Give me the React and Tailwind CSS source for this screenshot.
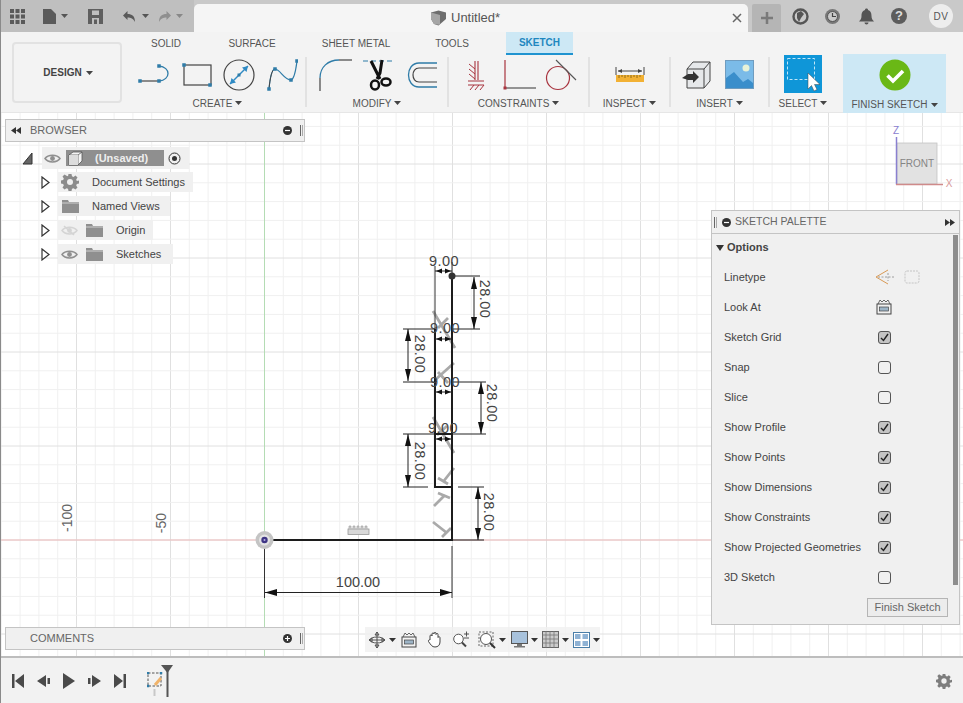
import { Fragment } from 'react';

const Caret = ({ color = '#444', className = '' }) => (
  <svg width="7" height="4" viewBox="0 0 7 4" className={className}>
    <path d="M0 0h7L3.5 4z" fill={color} />
  </svg>
);

const Pt = ({ x, y, c = '#2f7ca8', s = 4 }) => <rect x={x - s / 2} y={y - s / 2} width={s} height={s} fill={c} />;

const Icon = ({ w, h, children, className = '' }) => (
  <svg width={w} height={h} viewBox={`0 0 ${w} ${h}`} fill="none" className={className}>
    {children}
  </svg>
);

const LineArcIcon = () => (
  <Icon w={34} h={30}>
    <path d="M3 21H22" stroke="#444" strokeWidth="1.200" />
    <path d="M22 21C34 20 34 7 22 6" stroke="#2f7ca8" strokeWidth="1.300" />
    <Pt x={3} y={21} s={3.500} /><Pt x={22} y={21} s={3.500} /><Pt x={22} y={6} s={3.500} />
  </Icon>
);
const RectIcon = () => (
  <Icon w={30} h={24}>
    <rect x="2" y="2" width="27" height="20" stroke="#444" strokeWidth="1.200" />
    <Pt x={2} y={2} s={3.500} /><Pt x={28} y={22} s={3.500} />
  </Icon>
);
const CircleIcon = () => (
  <Icon w={32} h={32}>
    <circle cx="16" cy="16" r="15" stroke="#444" strokeWidth="1.200" />
    <path d="M7 25L25 7" stroke="#2f8ac4" strokeWidth="1.400" />
    <path d="M25 7l-6 1.500 4.500 4.500zM7 25l6-1.500L8.500 19z" fill="#2f8ac4" />
    <Pt x={16} y={16} s={3} />
  </Icon>
);
const SplineIcon = () => (
  <Icon w={32} h={34}>
    <path d="M3 31C4 20 6 11 9 11C14 11 18 22 25 22C29 21 30 10 31 3" stroke="#2f7ca8" strokeWidth="1.200" />
    <path d="M3 31C4 20 6 11 9 11" stroke="#444" strokeWidth="1" />
    <Pt x={3} y={31} s={3.500} /><Pt x={9} y={11} s={3.500} /><Pt x={25} y={22} s={3.500} /><Pt x={31} y={3} s={3.500} />
  </Icon>
);
const FilletIcon = () => (
  <Icon w={36} h={34} className="ml-[2px]">
    <path d="M2 33V20" stroke="#444" strokeWidth="1.200" />
    <path d="M2 20C2 9 10 2 21 2" stroke="#2f7ca8" strokeWidth="1.300" />
    <path d="M21 2H34" stroke="#444" strokeWidth="1.200" />
  </Icon>
);
const ScissorsIcon = () => (
  <Icon w={34} h={32}>
    <path d="M1 2H33" stroke="#2f7ca8" strokeWidth="1.200" strokeDasharray="5 3" />
    <path d="M9 2L18 20M20 1L18 14L15 20" stroke="#111" strokeWidth="3" />
    <ellipse cx="13" cy="26" rx="4" ry="4.500" stroke="#111" strokeWidth="2.500" />
    <ellipse cx="24" cy="23" rx="4.500" ry="3.500" stroke="#111" strokeWidth="2.500" />
  </Icon>
);
const OffsetIcon = () => (
  <Icon w={34} h={28}>
    <path d="M33 2H15C1 2 1 26 15 26H33" stroke="#2f7ca8" strokeWidth="1.300" />
    <path d="M33 7H15C7 7 7 21 15 21H33" stroke="#444" strokeWidth="1.200" />
  </Icon>
);
const FixIcon = () => (
  <Icon w={20} h={30} className="ml-[8px]">
    <path d="M9 1V20M12 1V20" stroke="#a8343f" strokeWidth="1.100" />
    <path d="M2 21H18M2 25H18" stroke="#a8343f" strokeWidth="1.200" />
    <path d="M3 4L9 9M3 9L9 14M3 14L9 19M4 30L8 25M9 30L13 25M14 30L18 25" stroke="#a8343f" strokeWidth="1" />
  </Icon>
);
const PerpIcon = () => (
  <Icon w={34} h={32} className="ml-[17px]">
    <path d="M2 1V29" stroke="#a8343f" strokeWidth="1.200" />
    <path d="M2 29H33" stroke="#444" strokeWidth="1.100" />
    <Pt x={2} y={29} c="#a8343f" s={3} />
  </Icon>
);
const TangentIcon = () => (
  <Icon w={34} h={32} className="ml-[8px]">
    <circle cx="13" cy="19" r="11.500" stroke="#a8343f" strokeWidth="1.200" />
    <path d="M11 1L31 21" stroke="#555" strokeWidth="1.100" />
  </Icon>
);
const RulerIcon = () => (
  <Icon w={30} h={18}>
    <path d="M1 1V9M29 1V9M3 5H27" stroke="#444" strokeWidth="1" />
    <path d="M3 5l4-2v4zM27 5l-4-2v4z" fill="#444" />
    <rect x="1" y="9" width="28" height="7" fill="#f2b134" />
    <path d="M4 9v3M7 9v2M10 9v3M13 9v2M16 9v3M19 9v2M22 9v3M25 9v2" stroke="#7a5a10" strokeWidth="0.800" />
  </Icon>
);
const InsertIcon = () => (
  <Icon w={30} h={30} className="-ml-[3px]">
    <path d="M5 9L11 2H28V21L22 28H5z" fill="#e6e8ea" stroke="#444" strokeWidth="1" />
    <path d="M22 9L28 2M22 9V28M5 9H22" stroke="#444" strokeWidth="1" />
    <path d="M0 18L6 14H11V11L17 17L11 23V20H6z" fill="#333" />
  </Icon>
);
const ImageIcon = () => (
  <Icon w={30} h={30}>
    <rect x="0.500" y="0.500" width="28" height="28" fill="#7bbbe8" stroke="#6f9cbf" />
    <circle cx="21" cy="8" r="3.500" fill="#e8f2d8" />
    <path d="M1 28V18L9 12L18 22L23 19L28 23V28z" fill="#3a8ecb" />
  </Icon>
);
const SelectIcon = () => (
  <Icon w={38} h={38}>
    <rect width="38" height="38" fill="#0f96d8" />
    <rect x="3.500" y="3.500" width="27" height="21" stroke="#bfe6f8" strokeDasharray="3 2" />
    <path d="M24 18V34L27.500 30.500L30 36L33 34.500L30.500 29.500H36z" fill="#fff" stroke="#444" strokeWidth="0.500" />
  </Icon>
);
const FinishIcon = () => (
  <Icon w={32} h={32}>
    <circle cx="16" cy="16" r="15.500" fill="#6ab816" />
    <path d="M8.500 16.500L14 22L24 12" stroke="#fff" strokeWidth="3.600" />
  </Icon>
);

const Gear = ({ size = 18, color = '#8c8c8c' }) => (
  <svg width={size} height={size} viewBox="0 0 18 18">
    <path d="M7.500 1h3l.5 2.300 1.500.6 2-1.300 2 2-1.300 2 .6 1.500L18 7.500v3l-2.200.5-.6 1.500 1.300 2-2 2-2-1.300-1.500.6-.5 2.200h-3L7 15.800l-1.500-.6-2 1.300-2-2 1.300-2-.6-1.500L0 10.500v-3l2.200-.5.6-1.500-1.300-2 2-2 2 1.300L7 3.300z" fill={color} />
    <circle cx="9" cy="9" r="3" fill="#f0f0f0" />
  </svg>
);
const Eye = ({ color = '#8f8f8f', off = false }) => (
  <svg width="17" height="11" viewBox="0 0 17 11" fill="none">
    <path d="M1 5.500C4 1 13 1 16 5.500C13 10 4 10 1 5.500z" stroke={color} strokeWidth="1.500" />
    <circle cx="8.500" cy="5.500" r="2.400" fill={color} />
    {off && <path d="M3 1L13 10" stroke={color} strokeWidth="1.500" />}
  </svg>
);
const Folder = () => (
  <svg width="17" height="13" viewBox="0 0 17 13">
    <path d="M0 0H6L7 2H17V13H0z" fill="#8f8f8f" />
    <path d="M0 3H17" stroke="#dedede" strokeWidth="0.800" />
  </svg>
);
const TreeArrow = () => (
  <svg width="9" height="13" viewBox="0 0 9 13" fill="none">
    <path d="M1 1L8 6.500L1 12z" fill="#fff" stroke="#333" strokeWidth="1.200" />
  </svg>
);
const PanelDot = ({ plus }) => (
  <svg width="9" height="9" viewBox="0 0 9 9">
    <circle cx="4.500" cy="4.500" r="4.500" fill="#333" />
    <path d={plus ? 'M2 4.500H7M4.500 2V7' : 'M2 4.500H7'} stroke="#fff" strokeWidth="1.200" />
  </svg>
);
const Grip = () => (
  <div className="flex gap-[1px]">
    <span className="w-[1px] h-[11px] bg-[#666]" />
    <span className="w-[1px] h-[11px] bg-[#aaa]" />
  </div>
);

const Cube = ({ size = 15 }) => (
  <svg width={size} height={size} viewBox="0 0 15 15">
    <path d="M1 4L5 1H14V10L10 14H1z" fill="#f4f4f4" stroke="#555" strokeWidth="0.800" />
    <path d="M1 4H10V14M10 4L14 1" fill="none" stroke="#555" strokeWidth="0.800" />
    <path d="M1 4H10V14H1z" fill="#dcdcdc" />
  </svg>
);

const groups = [
  { label: 'CREATE', w: 'w-[175px]', gap: 'gap-[11px]', icons: [LineArcIcon, RectIcon, CircleIcon, SplineIcon] },
  { label: 'MODIFY', w: 'w-[140px]', gap: 'gap-[8px]', icons: [FilletIcon, ScissorsIcon, OffsetIcon] },
  { label: 'CONSTRAINTS', w: 'w-[139px]', gap: 'gap-0', icons: [FixIcon, PerpIcon, TangentIcon] },
  { label: 'INSPECT', w: 'w-[79px]', gap: 'gap-0', icons: [RulerIcon] },
  { label: 'INSERT', w: 'w-[97px]', gap: 'gap-[13px]', icons: [InsertIcon, ImageIcon] },
];

const paletteRows = [
  ['Sketch Grid', true], ['Snap', false], ['Slice', false], ['Show Profile', true], ['Show Points', true],
  ['Show Dimensions', true], ['Show Constraints', true], ['Show Projected Geometries', true], ['3D Sketch', false],
];

const Check = ({ on }) => (
  <div className={`w-[13px] h-[13px] rounded-[3px] border border-[#555] flex items-center justify-center ${on ? 'bg-[#c4c4c4]' : 'bg-[#f0f0f0]'}`}>
    {on && (
      <svg width="9" height="9" viewBox="0 0 9 9" fill="none">
        <path d="M1 5L3.500 7.500L8 1" stroke="#222" strokeWidth="1.400" />
      </svg>
    )}
  </div>
);

const vLines = Array.from({ length: 52 }, (_, i) => 264.5 + (i - 14) * 18.8);
const hLines = Array.from({ length: 30 }, (_, i) => 540 + (i - 24) * 18.8);

const dimFont = { fontFamily: '"Liberation Sans", Arial, sans-serif', fontSize: 14.500, fill: '#444' };

const VDim = ({ x, y1, y2, tx, cy }) => (
  <g>
    <path d={`M${x} ${y1}V${y2}`} stroke="#222" strokeWidth="1" />
    <path d={`M${x} ${y1}l-3 12h6zM${x} ${y2}l-3 -12h6z`} fill="#111" />
    <text x={tx} y={cy} textAnchor="middle" transform={`rotate(90 ${tx} ${cy})`} dominantBaseline="middle" style={{ ...dimFont, letterSpacing: 0.400 }}>28.00</text>
  </g>
);

const SmallDim = ({ y, ty, tx }) => (
  <g>
    <path d={`M435 ${y}H452`} stroke="#222" strokeWidth="1" />
    <path d={`M436 ${y}l6 -2.500v5zM451 ${y}l-6 -2.500v5z`} fill="#111" />
    <text x={tx} y={ty} textAnchor="middle" style={{ ...dimFont, letterSpacing: 0.400 }}>9.00</text>
  </g>
);

const Tee = ({ s, b }) => (
  <path d={`M${s[0]} ${s[1]}L${s[2]} ${s[3]}M${b[0]} ${b[1]}L${b[2]} ${b[3]}`} stroke="#a9a9a9" strokeWidth="2.800" fill="none" />
);

const SketchCanvas = () => (
  <svg className="absolute inset-0" width="963" height="543" viewBox="0 113 963 543" fill="none">
    <rect x="0" y="113" width="963" height="543" fill="#fff" />
    {vLines.map((x, i) => (
      <path key={x} d={`M${x} 113V656`} stroke={(i - 14) % 5 === 0 ? '#e0e0e0' : '#f0f0f0'} strokeWidth="1" />
    ))}
    {hLines.map((y, i) => (
      <path key={y} d={`M0 ${y}H963`} stroke={(i - 24) % 5 === 0 ? '#e0e0e0' : '#f0f0f0'} strokeWidth="1" />
    ))}
    <path d="M264.500 113V656" stroke="#b4dcb4" strokeWidth="1" />
    <path d="M0 540H963" stroke="#f0bcbc" strokeWidth="1" />

    <text x="72" y="518" textAnchor="middle" transform="rotate(-90 72 518)" style={{ ...dimFont, fontSize: 14, fill: '#666' }}>-100</text>
    <text x="166" y="523" textAnchor="middle" transform="rotate(-90 166 523)" style={{ ...dimFont, fontSize: 14, fill: '#666' }}>-50</text>

    <Tee s={[433, 311, 455, 348]} b={[438, 328, 448, 318]} />
    <Tee s={[435, 380, 454, 363]} b={[438, 372, 448, 383]} />
    <Tee s={[433, 417, 454, 453]} b={[437, 435, 447, 426]} />
    <Tee s={[443, 482, 454, 468]} b={[438, 478, 448, 484]} />
    <Tee s={[434, 506, 445, 495]} b={[438, 493, 450, 498]} />
    <Tee s={[433, 522, 447, 533]} b={[442, 537, 451, 528]} />

    <path d="M452 276H480M403 329H435M452 329H480M403 382H435M452 382H486M403 434H435M452 434H486M403 487H428M458 487H484M452 540H484" stroke="#222" strokeWidth="1" />
    <path d="M435 266V329M452 262V276M264.500 540V598M452 546V598" stroke="#333" strokeWidth="1" />

    <path d="M264.500 540H452V276M435 329V487H452M435 434H452" stroke="#1c1c1c" strokeWidth="2" />
    <circle cx="452" cy="276" r="3.500" fill="#333" />

    <VDim x={474} y1={277} y2={329} tx={484} cy={299} />
    <VDim x={408} y1={329} y2={381} tx={419} cy={354} />
    <VDim x={481} y1={382} y2={434} tx={491} cy={403} />
    <VDim x={408} y1={434} y2={487} tx={419} cy={461} />
    <VDim x={478} y1={487} y2={540} tx={488} cy={512} />

    <SmallDim y={271} ty={266} tx={444} />
    <SmallDim y={339} ty={333} tx={445} />
    <SmallDim y={392} ty={387} tx={445} />
    <SmallDim y={439} ty={433} tx={443} />

    <path d="M265 592.500H452" stroke="#222" strokeWidth="1.200" />
    <path d="M265 592.500l12 -3.500v7zM452 592.500l-12 -3.500v7z" fill="#111" />
    <text x="358" y="587" textAnchor="middle" style={dimFont}>100.00</text>

    <rect x="348" y="529" width="21" height="5.500" fill="#d8d8d8" stroke="#999" strokeWidth="0.800" />
    <path d="M349 529v-3h2v3M353 529v-3h2v3M357 529v-3h2v3M361 529v-3h2v3M365 529v-3h2v3" fill="#d0d0d0" stroke="#999" strokeWidth="0.600" />

    <circle cx="264.500" cy="540" r="9" fill="#c4c4c4" />
    <circle cx="264.500" cy="540" r="5.500" fill="#e4e4e4" />
    <circle cx="264.500" cy="540" r="3.200" fill="#3f3685" />
    <circle cx="264.500" cy="540" r="1" fill="#b9b3e6" />

    <rect x="897" y="143" width="40" height="41" fill="#e2e2e2" stroke="#c4c4c4" strokeWidth="0.800" />
    <text x="917" y="167" textAnchor="middle" style={{ ...dimFont, fontSize: 10, fill: '#858585' }}>FRONT</text>
    <path d="M896.500 137V184.500" stroke="#8a80d0" strokeWidth="1.500" />
    <path d="M896 184.500H943" stroke="#cf8a8a" strokeWidth="1.500" />
    <text x="896" y="134" textAnchor="middle" style={{ ...dimFont, fontSize: 10, fill: '#8a80d0' }}>Z</text>
    <text x="949" y="187" textAnchor="middle" style={{ ...dimFont, fontSize: 10, fill: '#d89a9a' }}>X</text>
  </svg>
);

const TopBar = () => (
  <div className="h-[32px] bg-[#c9c9c9] flex items-end shrink-0">
    <div className="w-[194px] h-[32px] bg-[#bfbfbf] flex items-center">
      <svg width="15" height="15" viewBox="0 0 15 15" className="ml-[10px]" fill="#5a5a5a">
        <path d="M0 0h4v4H0zM5.500 0h4v4h-4zM11 0h4v4h-4zM0 5.500h4v4H0zM5.500 5.500h4v4h-4zM11 5.500h4v4h-4zM0 11h4v4H0zM5.500 11h4v4h-4zM11 11h4v4h-4z" />
      </svg>
      <svg width="13" height="15" viewBox="0 0 13 15" className="ml-[18px]" fill="#5a5a5a">
        <path d="M0 0H8L13 5V15H0z" />
      </svg>
      <Caret color="#555" className="ml-[5px]" />
      <svg width="15" height="15" viewBox="0 0 15 15" className="ml-[20px]">
        <path d="M0 0H15V15H0z" fill="#5f5f5f" />
        <path d="M4 1.500H11V6H4zM4 9H11V15H4z" fill="#bfbfbf" />
        <path d="M6 10.500H9V15H6z" fill="#5f5f5f" />
      </svg>
      <svg width="14" height="12" viewBox="0 0 14 12" className="ml-[19px]" fill="none">
        <path d="M1 5.500L5.500 1V4C10 4 13 6 13 12C11 8.500 9 7.500 5.500 7.500V10z" fill="#5a5a5a" />
      </svg>
      <Caret color="#555" className="ml-[6px]" />
      <svg width="14" height="12" viewBox="0 0 14 12" className="ml-[9px]" fill="none">
        <path d="M13 5.500L8.500 1V4C4 4 1 6 1 12C3 8.500 5 7.500 8.500 7.500V10z" fill="#8f8f8f" />
      </svg>
      <Caret color="#888" className="ml-[4px]" />
    </div>
    <div className="w-[554px] h-[28px] bg-[#f5f5f5] rounded-t-[5px] flex items-center relative">
      <div className="flex items-center justify-center gap-[4px] ml-[236px]">
        <svg width="17" height="16" viewBox="0 0 17 16">
          <path d="M1 2.500L8.500 0.500L16 2.500V9L8.500 15.500L4 14L1 9z" fill="#6d6d6d" />
          <path d="M1 2.500L10 5V15L4 14L1 9z" fill="#a5a5a5" />
        </svg>
        <span className="text-[13px] text-[#555]">Untitled*</span>
      </div>
      <svg width="10" height="10" viewBox="0 0 10 10" className="absolute right-[6px] top-[9px]">
        <path d="M1 1L9 9M9 1L1 9" stroke="#666" strokeWidth="1.500" />
      </svg>
    </div>
    <div className="w-[29px] h-[28px] ml-[4px] bg-[#b5b5b5] flex items-center justify-center rounded-t-[2px]">
      <svg width="14" height="14" viewBox="0 0 14 14">
        <path d="M7 1V13M1 7H13" stroke="#7a7a7a" strokeWidth="2.500" />
      </svg>
    </div>
    <div className="flex items-center h-[32px]">
      <svg width="17" height="17" viewBox="0 0 17 17" className="ml-[11px]" fill="none">
        <circle cx="8.500" cy="8.500" r="7" stroke="#555" strokeWidth="2.400" />
        <path d="M5 5L9 3L12 6L9 10L7 14L5 10z" fill="#555" />
      </svg>
      <svg width="17" height="17" viewBox="0 0 17 17" className="ml-[15px]" fill="none">
        <circle cx="8.500" cy="8.500" r="7.500" fill="#777" />
        <circle cx="8.500" cy="8.500" r="5" fill="#c9c9c9" stroke="#555" />
        <path d="M8.500 5V8.500H12" stroke="#444" strokeWidth="1.200" />
      </svg>
      <svg width="15" height="17" viewBox="0 0 15 17" className="ml-[18px]" fill="#555">
        <path d="M7.500 0.500C8.500 0.500 9 1 9 2C12 3 12.500 5.500 12.500 8C12.500 10.500 13.500 12 15 13.500H0C1.500 12 2.500 10.500 2.500 8C2.500 5.500 3 3 6 2C6 1 6.500 0.500 7.500 0.500zM5.500 14.500H9.500C9.500 17 5.500 17 5.500 14.500z" />
      </svg>
      <div className="ml-[17px] w-[16px] h-[16px] rounded-full bg-[#5c5c5c] text-[#ddd] text-[13px] font-bold flex items-center justify-center">?</div>
      <div className="ml-[22px] w-[24px] h-[24px] rounded-full bg-[#ededed] text-[#555] text-[10px] tracking-[0.5px] flex items-center justify-center">DV</div>
    </div>
  </div>
);

const Toolbar = () => (
  <div className="h-[81px] bg-[#f3f3f3] flex shrink-0 relative border-b border-[#e6e6e6]">
    <div className="w-[110px] h-[61px] ml-[12px] mt-[10px] border-2 border-[#e2e2e2] rounded-[4px] flex items-center justify-center gap-[4px] pl-[2px] text-[10px] font-bold text-[#444]">
      DESIGN <Caret />
    </div>
    <div className="ml-[8px] flex flex-col">
      <div className="h-[24px] flex text-[10px] text-[#555]">
        <div className="w-[72px] flex items-center justify-center">SOLID</div>
        <div className="w-[100px] flex items-center justify-center">SURFACE</div>
        <div className="w-[108px] flex items-center justify-center">SHEET METAL</div>
        <div className="w-[84px] flex items-center justify-center">TOOLS</div>
        <div className="w-[67px] ml-[12px] bg-[#cde8f5] border-b-[2px] border-[#1f93d0] text-[#1f87bf] font-bold flex items-center justify-center">SKETCH</div>
      </div>
      <div className="flex h-[57px]">
        {groups.map((g) => (
          <Fragment key={g.label}>
            <div className={`${g.w} flex flex-col items-center`}>
              <div className={`h-[40px] flex items-center ${g.gap}`}>
                {g.icons.map((Ic, j) => <Ic key={j} />)}
              </div>
              <div className="flex items-center gap-[3px] text-[10px] text-[#555] h-[18px]">
                {g.label} <Caret />
              </div>
            </div>
            <div className="w-[2px] h-[50px] mt-[2px] bg-[#e2e2e2] shrink-0" />
          </Fragment>
        ))}
        <div className="w-[66px] flex flex-col items-center -mt-[2px]">
          <div className="h-[42px] flex items-center"><SelectIcon /></div>
          <div className="flex items-center gap-[3px] text-[10px] text-[#555] h-[18px]">SELECT <Caret /></div>
        </div>
      </div>
    </div>
    <div className="absolute left-[843px] top-[22px] w-[103px] h-[59px] bg-[#cde8f5] flex flex-col items-center pt-[5px]">
      <FinishIcon />
      <div className="flex items-center gap-[3px] text-[10px] text-[#555] mt-[6px]">FINISH SKETCH <Caret /></div>
    </div>
  </div>
);

const TreeRow = ({ chip, children }) => (
  <div className="h-6 flex items-center">
    <div className="ml-[36px]"><TreeArrow /></div>
    <div className={`ml-[8px] h-[20px] bg-[#f0f0f0] flex items-center ${chip}`}>{children}</div>
  </div>
);

const BrowserPanel = () => (
  <div className="absolute left-[5px] top-[6px] w-[300px]">
    <div className="h-[23px] bg-[#f0f0f0] border border-[#c4c4c4] flex items-center text-[11px] text-[#666]">
      <svg width="10" height="7" viewBox="0 0 10 7" className="ml-[5px]" fill="#333">
        <path d="M5 0V7L0 3.500zM10 0V7L5 3.500z" />
      </svg>
      <span className="ml-[9px] flex-1">BROWSER</span>
      <PanelDot />
      <div className="ml-[8px] mr-[1px]"><Grip /></div>
    </div>
    <div className="pt-[4px]">
      <div className="h-6 flex items-center">
        <svg width="11" height="13" viewBox="0 0 11 13" className="ml-[17px]">
          <path d="M10 1V12H1z" fill="#666" stroke="#333" />
        </svg>
        <div className="ml-[9px] h-[22px] w-[147px] bg-[#f0f0f0] flex items-center">
          <div className="ml-[2px]"><Eye /></div>
          <div className="ml-[5px] h-[16px] w-[98px] bg-[#8f8f8f] flex items-center">
            <div className="ml-[2px]"><Cube /></div>
            <span className="ml-[12px] text-[11px] font-bold text-[#eee]">(Unsaved)</span>
          </div>
          <svg width="13" height="13" viewBox="0 0 13 13" className="ml-[4px]" fill="none">
            <circle cx="6.500" cy="6.500" r="5.500" stroke="#333" />
            <circle cx="6.500" cy="6.500" r="2.500" fill="#333" />
          </svg>
        </div>
      </div>
      <TreeRow chip="w-[135px]">
        <div className="ml-[3px]"><Gear /></div>
        <span className="ml-[13px] text-[11px] text-[#444]">Document Settings</span>
      </TreeRow>
      <TreeRow chip="w-[112px]">
        <div className="ml-[4px]"><Folder /></div>
        <span className="ml-[13px] text-[11px] text-[#444]">Named Views</span>
      </TreeRow>
      <TreeRow chip="w-[95px]">
        <div className="ml-[3px]"><Eye color="#d4d4d4" off /></div>
        <div className="ml-[8px]"><Folder /></div>
        <span className="ml-[13px] text-[11px] text-[#444]">Origin</span>
      </TreeRow>
      <TreeRow chip="w-[115px]">
        <div className="ml-[3px]"><Eye /></div>
        <div className="ml-[8px]"><Folder /></div>
        <span className="ml-[13px] text-[11px] text-[#444]">Sketches</span>
      </TreeRow>
    </div>
  </div>
);

const LookAt = () => (
  <svg width="16" height="16" viewBox="0 0 16 16" fill="none">
    <rect x="1" y="5" width="14" height="10" stroke="#444" />
    <rect x="3.500" y="8" width="9" height="4" fill="#9db4c6" stroke="#444" strokeWidth="0.700" />
    <path d="M2 5L4 1L6 3L8 1L10 3L12 1L14 5" stroke="#444" strokeWidth="0.800" />
  </svg>
);

const Palette = () => (
  <div className="absolute left-[711px] top-[97px] w-[249px] h-[415px] bg-[#f0f0f0] border border-[#c4c4c4] flex flex-col">
    <div className="h-[23px] shrink-0 border-b border-[#c4c4c4] flex items-center text-[10.5px] text-[#666]">
      <div className="ml-[2px]"><Grip /></div>
      <div className="ml-[5px] mr-[4px] flex"><PanelDot /></div>
      <span className="flex-1">SKETCH PALETTE</span>
      <svg width="10" height="7" viewBox="0 0 10 7" className="mr-[4px]" fill="#333">
        <path d="M0 0V7L5 3.500zM5 0V7L10 3.500z" />
      </svg>
    </div>
    <div className="flex flex-1 min-h-0">
      <div className="flex-1">
        <div className="h-[27px] flex items-center text-[11px] font-bold text-[#444] pl-[4px] mb-[1px]">
          <svg width="8" height="6" viewBox="0 0 8 6" className="mr-[3px]"><path d="M0 0H8L4 6z" fill="#333" /></svg>
          Options
        </div>
        <div className="h-[30px] flex items-center pl-[12px] text-[11px] text-[#444]">
          <span className="flex-1">Linetype</span>
          <svg width="20" height="18" viewBox="0 0 20 18" fill="none" className="mr-[9px]">
            <path d="M1 9L13 2M1 9L13 16" stroke="#d99a55" strokeWidth="1" />
            <path d="M3 9H19M13 5V13" stroke="#888" strokeWidth="0.800" strokeDasharray="2 1.500" />
          </svg>
          <svg width="16" height="16" viewBox="0 0 16 16" fill="none" className="mr-[33px]">
            <rect x="1" y="2" width="14" height="12" rx="2" stroke="#c4c4c4" strokeDasharray="2 1" />
          </svg>
        </div>
        <div className="h-[30px] flex items-center pl-[12px] text-[11px] text-[#444]">
          <span className="flex-1">Look At</span>
          <div className="mr-[61px]"><LookAt /></div>
        </div>
        {paletteRows.map(([label, on]) => (
          <div key={label} className="h-[30px] flex items-center pl-[12px] text-[11px] text-[#444]">
            <span className="flex-1">{label}</span>
            <div className="mr-[62px]"><Check on={on} /></div>
          </div>
        ))}
      </div>
      <div className="w-[5px] h-[350px] mt-[1px] mr-[1px] bg-[#8d8d8d]" />
    </div>
    <div className="h-[34px] shrink-0 flex items-center justify-end pr-[11px] -mt-[34px]">
      <div className="w-[81px] h-[19px] bg-[#ececec] border border-[#b5b5b5] text-[11px] text-[#666] flex items-center justify-center">
        Finish Sketch
      </div>
    </div>
  </div>
);

const NavBar = () => (
  <div className="absolute left-[365px] top-[514px] w-[235px] h-[25px] bg-[#f0f0f0]/80 flex items-center pl-[3px]">
    <svg width="18" height="18" viewBox="0 0 18 18" fill="none">
      <path d="M9 1V17M1 9H17M9 1l-2 3h4zM9 17l-2-3h4zM1 9l3-2v4zM17 9l-3-2v4z" stroke="#444" strokeWidth="0.900" />
      <ellipse cx="9" cy="9" rx="7" ry="3" stroke="#555" />
    </svg>
    <Caret color="#333" className="ml-[3px]" />
    <div className="ml-[5px]"><LookAt /></div>
    <svg width="16" height="17" viewBox="0 0 16 17" fill="none" className="ml-[10px]">
      <path d="M3 9V5C3 3.500 5 3.500 5 5V3C5 1.500 7 1.500 7 3V2.500C7 1 9 1 9 2.500V3.500C9 2 11 2 11 3.500V6.500C11 5.500 13 5 13 7V11C13 14 11 16 8 16C5 16 4 14 1.500 10.500C1 9 2.500 8.500 3 9z" stroke="#444" fill="#fff" />
    </svg>
    <svg width="18" height="17" viewBox="0 0 18 17" fill="none" className="ml-[9px]">
      <circle cx="6.500" cy="8" r="4.800" stroke="#555" fill="#fff" />
      <path d="M10 11.500L14 15.500" stroke="#444" strokeWidth="2" />
      <path d="M12 3H17M14.500 0.500V5.500M12 7H17" stroke="#444" strokeWidth="0.900" />
    </svg>
    <svg width="19" height="18" viewBox="0 0 19 18" fill="none" className="ml-[8px]">
      <rect x="1" y="1" width="14" height="14" stroke="#666" strokeDasharray="2 1.500" />
      <circle cx="8" cy="8" r="5.500" stroke="#555" fill="#fff" />
      <path d="M12 12L17 17" stroke="#333" strokeWidth="2" />
    </svg>
    <Caret color="#333" className="ml-[2px]" />
    <svg width="17" height="17" viewBox="0 0 17 17" className="ml-[5px]">
      <rect x="0.500" y="0.500" width="16" height="12" fill="#a8c2dc" stroke="#555" />
      <path d="M6 13H11V15H6zM3 15H14V16.500H3z" fill="#777" />
    </svg>
    <Caret color="#333" className="ml-[3px]" />
    <svg width="17" height="17" viewBox="0 0 17 17" className="ml-[4px]">
      <rect x="0.500" y="0.500" width="16" height="16" fill="#ccc" stroke="#666" />
      <path d="M4 0V17M8 0V17M12 0V17M0 4H17M0 8H17M0 12H17" stroke="#777" strokeWidth="0.800" />
    </svg>
    <Caret color="#333" className="ml-[3px]" />
    <svg width="17" height="16" viewBox="0 0 17 16" className="ml-[4px]">
      <rect x="0.500" y="0.500" width="16" height="15" fill="#fff" stroke="#4a7ea8" />
      <path d="M2 2H7.500V7H2zM9.500 2H15V7H9.500zM2 9H7.500V14H2zM9.500 9H15V14H9.500z" fill="#8fb2d4" />
    </svg>
    <Caret color="#333" className="ml-[3px]" />
  </div>
);

const CommentsPanel = () => (
  <div className="absolute left-[5px] top-[514px] w-[300px] h-[23px] bg-[#f0f0f0] border border-[#c4c4c4] flex items-center text-[11px] text-[#666]">
    <span className="ml-[24px] flex-1">COMMENTS</span>
    <PanelDot plus />
    <div className="ml-[8px] mr-[1px]"><Grip /></div>
  </div>
);

const Timeline = () => (
  <div className="h-[47px] bg-[#f2f2f2] border-t-2 border-[#bdbdbd] shrink-0 flex items-center relative">
    <svg width="12" height="14" viewBox="0 0 12 14" className="ml-[12px]" fill="#4a4a4a"><path d="M0 0H2.500V14H0zM12 0V14L3 7z" /></svg>
    <svg width="13" height="12" viewBox="0 0 13 12" className="ml-[13px]" fill="#4a4a4a"><path d="M9 0V12L0 6zM10.500 3H13V9H10.500z" /></svg>
    <svg width="12" height="16" viewBox="0 0 12 16" className="ml-[13px]" fill="#4a4a4a"><path d="M0 0L12 8L0 16z" /></svg>
    <svg width="13" height="12" viewBox="0 0 13 12" className="ml-[13px]" fill="#4a4a4a"><path d="M4 0V12L13 6zM0 3H2.500V9H0z" /></svg>
    <svg width="12" height="14" viewBox="0 0 12 14" className="ml-[13px]" fill="#4a4a4a"><path d="M0 0V14L9 7zM9.500 0H12V14H9.500z" /></svg>
    <svg width="16" height="24" viewBox="0 0 16 24" fill="none" className="ml-[21px] mt-[6px]">
      <rect x="1" y="1" width="13" height="13" stroke="#555" strokeDasharray="2.500 1.500" />
      <path d="M8 13L14 6" stroke="#f0b36a" strokeWidth="3" />
      <path d="M7.500 17V24" stroke="#c8c8c8" strokeWidth="2" />
      <Pt x={1} y={1} s={2.500} /><Pt x={14} y={1} s={2.500} /><Pt x={1} y={14} s={2.500} />
    </svg>
    <svg width="13" height="32" viewBox="0 0 13 32" className="-ml-[2px]">
      <path d="M0 0H12L6.500 8z" fill="#555" />
      <path d="M5.500 5H7.500V32H5.500z" fill="#555" />
    </svg>
    <div className="absolute left-[936px] top-[15px]"><Gear size={16} color="#7d7d7d" /></div>
  </div>
);

export default function App() {
  return (
    <div
      className="w-[963px] h-[703px] flex flex-col overflow-hidden relative"
      style={{ fontFamily: '"Liberation Sans", Arial, sans-serif' }}
    >
      <TopBar />
      <Toolbar />
      <div className="flex-1 relative">
        <SketchCanvas />
        <BrowserPanel />
        <Palette />
        <NavBar />
        <CommentsPanel />
      </div>
      <Timeline />
      <div className="absolute left-0 top-0 w-px h-full bg-[#8a8a8a]" />
    </div>
  );
}
